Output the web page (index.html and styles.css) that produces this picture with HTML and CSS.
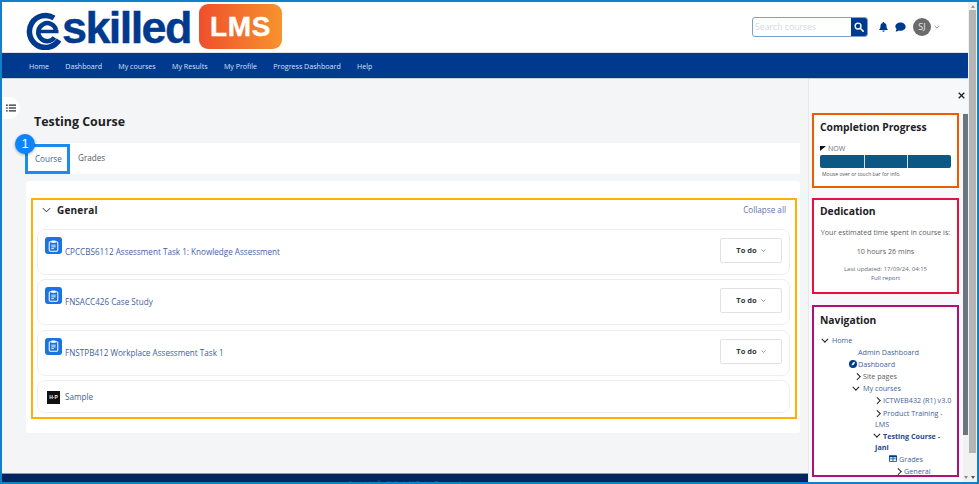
FILE: index.html
```html
<!DOCTYPE html>
<html lang="en">
<head>
<meta charset="utf-8">
<title>Testing Course</title>
<link rel="stylesheet" href="styles.css">
</head>
<body>
<div class="frame">
  <div class="page">
    <header class="topbar">
      <div class="logo">
        <svg class="logo-e" width="37" height="38" viewBox="0 0 37 38" role="img" aria-label="eSkilled mark"><path d="M29 6A16 16 0 1 0 34 28" fill="none" stroke="#003a8f" stroke-width="5.500"/><path d="M31 18A9 9 0 1 0 29.500 25.500" fill="none" stroke="#003a8f" stroke-width="4.500"/><path d="M14 19.500H33.500" stroke="#003a8f" stroke-width="3.500"/></svg>
        <span class="logo-word">skilled</span>
        <span class="lms">LMS</span>
      </div>
      <div class="tools">
        <div class="search">
          <span class="search-input">Search courses</span>
          <span class="search-btn"><svg width="10" height="10" viewBox="0 0 16 16"><circle cx="6.5" cy="6.5" r="4.7" fill="none" stroke="#fff" stroke-width="2.2"/><path d="M10 10l4.6 4.6" stroke="#fff" stroke-width="2.4" stroke-linecap="round"/></svg></span>
        </div>
        <svg class="bell" width="9" height="10" viewBox="0 0 16 18"><path d="M8 0a1.6 1.6 0 0 0-1.6 1.7C3.8 2.4 2.6 4.500 2.600 7c0 3.500-1 4.800-2.200 6v1.300h15.200V13c-1.200-1.200-2.200-2.500-2.200-6 0-2.500-1.200-4.600-3.800-5.300A1.600 1.600 0 0 0 8 0zM5.800 15.300a2.200 2.200 0 0 0 4.400 0z" fill="#003a8f"/></svg>
        <svg class="chat" width="11" height="10" viewBox="0 0 18 16"><path d="M9 0.500C4.200 0.500 0.500 3.500 0.500 7c0 1.600.8 3 2 4.100C2.200 12.800 1 14.500 1 15.500c2.200 0 4-1 5-1.900 1 .3 2 .4 3 .4 4.800 0 8.500-3 8.500-6.500S13.800.5 9 .5z" fill="#003a8f"/></svg>
        <span class="avatar">SJ</span>
        <svg class="caret" width="6" height="4" viewBox="0 0 10 6"><path d="M1 1l4 4 4-4" fill="none" stroke="#6f86b5" stroke-width="1.500"/></svg>
      </div>
    </header>
    <nav class="mainnav">
      <a>Home</a><a>Dashboard</a><a>My courses</a><a>My Results</a><a>My Profile</a><a>Progress Dashboard</a><a>Help</a>
    </nav>
    <div class="workspace">
      <div class="column">
        <main class="main">
          <button class="index-toggle"><svg width="10" height="8" viewBox="0 0 14 11"><g fill="#2b2f36"><circle cx="1.300" cy="1.500" r="1.200"/><circle cx="1.300" cy="5.500" r="1.200"/><circle cx="1.300" cy="9.500" r="1.200"/><rect x="4" y="0.600" width="10" height="1.800"/><rect x="4" y="4.600" width="10" height="1.800"/><rect x="4" y="8.600" width="10" height="1.800"/></g></svg></button>
          <h1 class="title">Testing Course</h1>
          <div class="tabs">
            <a class="tab tab-active">Course<span class="step">1</span></a>
            <a class="tab">Grades</a>
          </div>
          <section class="card">
            <div class="general">
              <div class="general-head">
                <svg width="9" height="6" viewBox="0 0 10 6"><path d="M1 1l4 4 4-4" fill="none" stroke="#1d2125" stroke-width="1.100"/></svg>
                <h2>General</h2>
                <a class="collapse">Collapse all</a>
              </div>
              <div class="activity">
                <span class="assign-icon"><svg width="11" height="12" viewBox="0 0 12 14"><rect x="1" y="2" width="10" height="11" rx="1.200" fill="none" stroke="#fff" stroke-width="1.200"/><rect x="3.500" y="0.700" width="5" height="2.600" rx="0.700" fill="#fff"/><path d="M3.500 6h5M3.500 8h5M3.500 10h3" stroke="#fff" stroke-width="1"/></svg></span>
                <a class="act-name">CPCCBS6112 Assessment Task 1: Knowledge Assessment</a>
                <span class="todo">To do <svg width="5" height="3" viewBox="0 0 10 6"><path d="M1 1l4 4 4-4" fill="none" stroke="#6a737b" stroke-width="1.500"/></svg></span>
              </div>
              <div class="activity">
                <span class="assign-icon"><svg width="11" height="12" viewBox="0 0 12 14"><rect x="1" y="2" width="10" height="11" rx="1.200" fill="none" stroke="#fff" stroke-width="1.200"/><rect x="3.500" y="0.700" width="5" height="2.600" rx="0.700" fill="#fff"/><path d="M3.500 6h5M3.500 8h5M3.500 10h3" stroke="#fff" stroke-width="1"/></svg></span>
                <a class="act-name">FNSACC426 Case Study</a>
                <span class="todo">To do <svg width="5" height="3" viewBox="0 0 10 6"><path d="M1 1l4 4 4-4" fill="none" stroke="#6a737b" stroke-width="1.500"/></svg></span>
              </div>
              <div class="activity">
                <span class="assign-icon"><svg width="11" height="12" viewBox="0 0 12 14"><rect x="1" y="2" width="10" height="11" rx="1.200" fill="none" stroke="#fff" stroke-width="1.200"/><rect x="3.500" y="0.700" width="5" height="2.600" rx="0.700" fill="#fff"/><path d="M3.500 6h5M3.500 8h5M3.500 10h3" stroke="#fff" stroke-width="1"/></svg></span>
                <a class="act-name">FNSTPB412 Workplace Assessment Task 1</a>
                <span class="todo">To do <svg width="5" height="3" viewBox="0 0 10 6"><path d="M1 1l4 4 4-4" fill="none" stroke="#6a737b" stroke-width="1.500"/></svg></span>
              </div>
              <div class="activity activity-short">
                <span class="hp-icon">H·P</span>
                <a class="act-name">Sample</a>
              </div>
            </div>
          </section>
        </main>
        <footer class="footer"><span class="footer-text">Copyright © eSkilled. All Rights Reserved.</span></footer>
      </div>
      <aside class="drawer">
        <div class="drawer-close"><svg width="7" height="7" viewBox="0 0 10 10"><path d="M1 1l8 8M9 1l-8 8" stroke="#1d2125" stroke-width="1.800"/></svg></div>
        <div class="drawer-body">
          <div class="blocks">
            <section class="block block-progress">
              <h3>Completion Progress</h3>
              <div class="now"><span class="now-flag"></span>NOW</div>
              <div class="bar"><span></span><span></span><span></span></div>
              <p class="hint">Mouse over or touch bar for info.</p>
            </section>
            <section class="block block-dedication">
              <h3>Dedication</h3>
              <p class="ded-line">Your estimated time spent in course is:</p>
              <p class="ded-time">10 hours 26 mins</p>
              <p class="ded-small">Last updated: 17/09/24, 04:15</p>
              <a class="ded-link">Full report</a>
            </section>
            <section class="block block-nav">
              <h3>Navigation</h3>
              <ul class="tree">
                <li class="lv0 open"><a>Home</a></li>
                <li class="lv1 plain"><a>Admin Dashboard</a></li>
                <li class="lv1b"><svg class="dash" width="8" height="8" viewBox="0 0 10 10"><circle cx="5" cy="5" r="5" fill="#003a8f"/><path d="M3 7l1.500-3.500L8 2 6 6z" fill="#fff"/></svg><a>Dashboard</a></li>
                <li class="lv2 closed"><span class="muted">Site pages</span></li>
                <li class="lv2 open"><a>My courses</a></li>
                <li class="lv3 closed"><a>ICTWEB432 (R1) v3.0</a></li>
                <li class="lv3 closed"><a>Product Training - LMS</a></li>
                <li class="lv3 open"><a class="current">Testing Course - Jani</a></li>
                <li class="lv4"><svg class="grid" width="8" height="7" viewBox="0 0 10 8"><rect width="10" height="8" rx="1" fill="#003a8f"/><path d="M1 2.500h3.500v1.500H1zM5.500 2.500H9v1.500H5.500zM1 5h3.500v2H1zM5.500 5H9v2H5.500z" fill="#fff"/></svg><a>Grades</a></li>
                <li class="lv5 closed"><a>General</a></li>
              </ul>
            </section>
          </div>
          <div class="rail"><span class="thumb"></span></div>
        </div>
      </aside>
    </div>
  </div>
  <div class="pagebar"><span class="pagethumb"></span></div>
</div>
</body>
</html>
```
FILE: styles.css
```css
* { box-sizing: border-box; }
html, body { margin: 0; padding: 0; }
body { width: 979px; height: 484px; overflow: hidden; font-family: "Open Sans", "Liberation Sans", sans-serif; color: #1d2125; background: #fff; }
a { color: #3f5f9f; text-decoration: none; }
p, h1, h2, h3, ul { margin: 0; padding: 0; }

.frame { width: 979px; height: 484px; border: 2px solid #1280c8; display: flex; overflow: hidden; }
.page { width: 966px; height: 480px; display: flex; flex-direction: column; flex: none; }

.topbar { height: 51px; flex: none; display: flex; justify-content: space-between; background: #fff; border-bottom: 1px solid #dfe3ea; }
.logo { display: flex; align-items: flex-start; padding-left: 23px; }
.logo-e { flex: none; margin-top: 10px; }
.logo-word { font: 700 45px/40px "Liberation Sans", sans-serif; color: #003a8f; letter-spacing: -1.600px; margin-top: 6px; width: 137px; -webkit-text-stroke: .4px #003a8f; }
.lms { width: 83px; height: 45px; margin-top: 2px; border-radius: 9px; background: linear-gradient(90deg, #ef4f2c, #f7932e); color: #fff; font: 700 28px/45px "Liberation Sans", sans-serif; text-align: center; letter-spacing: .6px; -webkit-text-stroke: .4px #fff; }

.tools { display: flex; align-items: center; padding: 0 28px 0 0; }
.search { display: flex; width: 116px; height: 20px; border: 1px solid #7f9fd0; border-radius: 3px; overflow: hidden; }
.search-input { flex: 1; font-size: 8.700px; line-height: 18px; color: #d4d7dc; padding-left: 2px; }
.search-btn { width: 16px; background: #003a8f; display: flex; align-items: center; justify-content: center; }
.bell { margin-left: 11px; }
.chat { margin-left: 7px; }
.avatar { width: 18px; height: 18px; border-radius: 50%; background: #6b6b6b; color: #e6e6e6; font-size: 9px; line-height: 18px; text-align: center; margin-left: 7px; }
.caret { margin-left: 3px; }

.mainnav { height: 26px; flex: none; background: #003a8f; display: flex; align-items: center; padding-left: 27px; gap: 16.300px; border-bottom: 1px solid #c9d0dc; }
.mainnav a { color: #d6e0f2; font-size: 7.100px; }

.workspace { flex: 1; min-height: 0; display: flex; }
.column { width: 806px; flex: none; display: flex; flex-direction: column; position: relative; }
.main { flex: 1; min-height: 0; background: #f4f5f7; padding: 34px 8px 0 24px; }
.index-toggle { position: absolute; left: 0; top: 18px; width: 18px; height: 22px; padding: 0; border: 0; background: #fff; border-radius: 0 11px 11px 0; display: flex; align-items: center; justify-content: center; }
.title { font-size: 12.400px; line-height: 18px; font-weight: 700; margin-left: 8px; }
.tabs { margin-top: 12px; height: 31px; background: #fff; display: flex; align-items: center; font-size: 8.150px; }
.tab { color: #555b62; height: 30px; line-height: 28px; display: block; }
.tab-active { width: 45px; margin-left: -1px; border: 3px solid #1a8cf0; color: #3f5f9f; padding-left: 7px; margin-right: 8px; position: relative; line-height: 23px; }
.step { position: absolute; left: -13px; top: -13px; width: 20px; height: 20px; border-radius: 50%; background: #0a84ff; color: #fff; font: 400 13px/20px "Liberation Sans", sans-serif; text-align: center; box-shadow: 0 1px 3px rgba(0,0,0,.35); }

.card { margin-top: 7px; height: 252px; background: #fff; border-radius: 3px; padding: 17px 3px 0 5px; }
.general { height: 221px; border: 2px solid #ffb000; padding: 0 5px 0 4px; }
.general-head { height: 29px; display: flex; align-items: center; padding: 0 4px 10px 5px; }
.general-head h2 { font-size: 10px; line-height: 14px; font-weight: 700; margin-left: 6px; letter-spacing: .2px; }
.collapse { margin-left: auto; font-size: 8.150px; color: #5a75b0; }
.activity { height: 46px; margin-bottom: 4.250px; border: 1px solid #eceef1; border-radius: 8px; display: flex; align-items: flex-start; padding: 7px 7px 0 7px; }
.activity-short { height: 33px; margin-bottom: 0; padding-top: 9px; }
.assign-icon { width: 17px; height: 17px; border-radius: 3px; background: #1a73e0; display: flex; align-items: center; justify-content: center; flex: none; }
.act-name { font-size: 8.150px; line-height: 12px; margin: 9px 0 0 3px; color: #3f5f9f; }
.activity-short .act-name { margin-top: 1.500px; }
.hp-icon { width: 13px; height: 13px; margin: 1px 2px 0 2px; background: #111; color: #eee; font: 700 5px/13px "Liberation Sans", sans-serif; text-align: center; flex: none; }
.todo { margin-left: auto; width: 62px; height: 25px; border: 1px solid #dfe2e6; border-radius: 2px; font-size: 7.500px; font-weight: 700; line-height: 23px; text-align: center; color: #33383d; margin-top: 1px; }
.todo svg { margin-left: 2px; vertical-align: 1px; }

.footer { height: 9px; flex: none; background: #00245f; border-top: 1px solid #8d99ad; color: #51658c; font-size: 6px; line-height: 8px; text-align: center; padding-top: 5px; }
.footer-text { display: block; height: 3px; overflow: hidden; }

.drawer { width: 160px; flex: none; background: #f7f8f9; border-left: 1px solid #e6e8eb; display: flex; flex-direction: column; box-shadow: -1px 0 2px rgba(0,0,0,.05); }
.drawer-close { height: 34px; flex: none; padding: 11px 3px 0 0; text-align: right; line-height: 7px; }
.drawer-body { flex: 1; min-height: 0; display: flex; padding-left: 3px; }
.blocks { width: 147px; flex: none; overflow: hidden; }
.block { background: #fff; border: 2px solid; margin-bottom: 10px; padding: 0 6px; }
.block h3 { font-size: 10.300px; line-height: 14px; font-weight: 700; color: #1d2125; }
.block-progress { height: 75px; border-color: #f05a00; padding: 5px 6px 0 6px; }
.now { margin-top: 10px; font-size: 7px; line-height: 9px; color: #666c73; display: flex; align-items: center; }
.now-flag { width: 0; height: 0; border-top: 5px solid #111; border-right: 6px solid transparent; margin-right: 2px; }
.bar { margin-top: 2px; height: 13px; background: #0b5884; border-radius: 2px; display: grid; grid-template-columns: 1fr 1fr 1fr; }
.bar span + span { border-left: 1px solid #cfe0ea; }
.hint { font-size: 5.100px; line-height: 8px; color: #555; margin: 2px 0 0 2px; white-space: nowrap; }
.block-dedication { height: 96px; border-color: #e8103f; padding-top: 4px; text-align: center; margin-bottom: 11px; }
.block-dedication h3 { text-align: left; }
.ded-line { font-size: 7.150px; line-height: 11px; color: #5a6066; margin-top: 9px; white-space: nowrap; }
.ded-time { font-size: 7.150px; line-height: 11px; color: #5a6066; margin-top: 8px; }
.ded-small { font-size: 6px; line-height: 9px; color: #666c73; margin-top: 8px; }
.ded-link { display: block; font-size: 6px; line-height: 9px; color: #3f5f9f; }
.block-nav { height: 172px; border-color: #b0107a; padding-top: 6px; margin-bottom: 0; overflow: hidden; }
.tree { list-style: none; font-size: 7.200px; line-height: 11px; margin: 8px -6px 0 0; }
.tree li { position: relative; margin-bottom: 1.100px; }
.tree .muted { color: #5a6066; }
.tree .current { font-weight: 700; color: #1f4690; }
.closed::before, .open::before { content: ""; position: absolute; width: 3.500px; height: 3.500px; border: solid #1d2125; border-width: 1.200px 1.200px 0 0; }
.closed::before { transform: rotate(45deg); top: 3px; margin-left: -8px; }
.open::before { transform: rotate(135deg); top: 1.500px; margin-left: -9px; }
.lv0 { padding-left: 12px; }
.lv1.plain { padding-left: 38px; }
.lv1b { padding-left: 29px; }
.dash { margin-right: 1px; vertical-align: -1px; }
.lv2 { padding-left: 43px; }
.lv3 { padding: 0 5px 0 55px; text-indent: 8px; }
.lv3::before { margin-left: -8px; text-indent: 0; }
.lv4 { padding-left: 69px; }
.grid { margin-right: 2px; vertical-align: -.5px; }
.lv5 { padding-left: 84px; }
.rail { width: 5px; margin-left: 4px; background: #f1f1f1; padding-top: 1px; display: flex; flex-direction: column; align-items: center; }
.thumb { display: block; width: 5px; height: 321px; background: #6c757d; }
.rail::after { content: ""; margin-top: auto; margin-bottom: 3px; border-top: 3px solid #8a8a8a; border-left: 2px solid transparent; border-right: 2px solid transparent; }

.pagebar { width: 9px; flex: none; background: #f1f1f1; display: flex; flex-direction: column; align-items: center; }
.pagebar::before { content: ""; margin-top: 3px; border-bottom: 3px solid #9a9a9a; border-left: 2.500px solid transparent; border-right: 2.500px solid transparent; }
.pagebar::after { content: ""; margin-top: auto; margin-bottom: 3px; border-top: 3px solid #555; border-left: 2.500px solid transparent; border-right: 2.500px solid transparent; }
.pagethumb { display: block; margin-top: 2px; width: 7px; height: 443px; background: #b5b5b5; }
```
